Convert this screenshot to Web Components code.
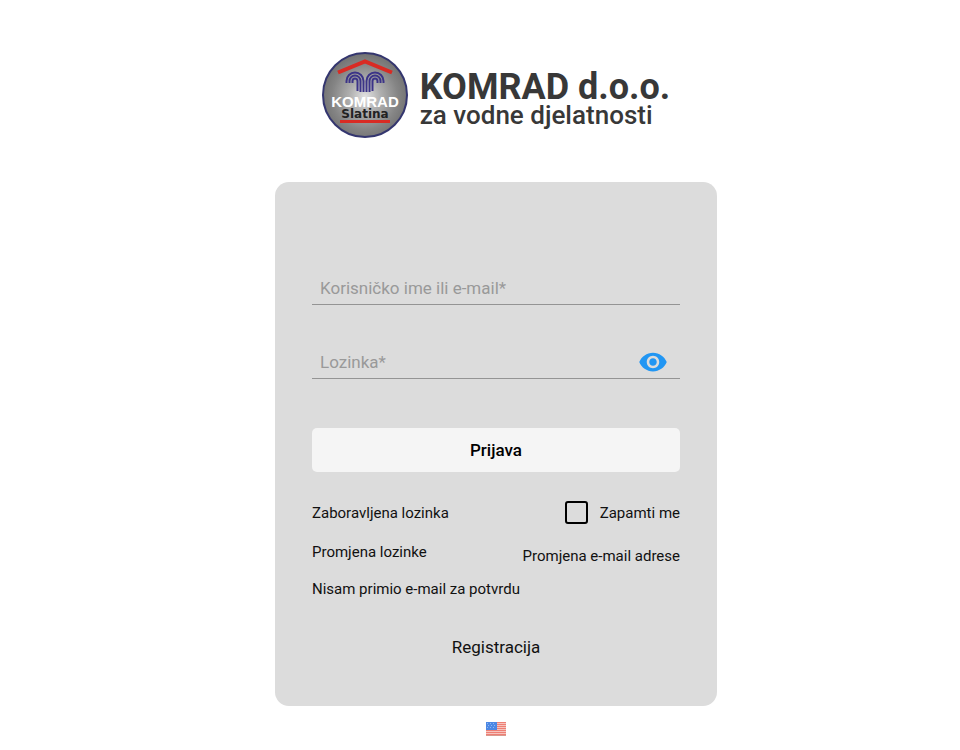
<!DOCTYPE html>
<html lang="hr">
<head>
<meta charset="utf-8">
<meta name="viewport" content="width=device-width, initial-scale=1">
<title>KOMRAD d.o.o.</title>
<style>
  body {
    margin: 0;
    background: #fff;
    color: #111;
    font: 15px/20px Roboto, sans-serif;
  }
</style>
</head>
<body>
<login-page>
  <brand-logo slot="header"></brand-logo>
  <login-card>
    <text-field name="username">Korisničko ime ili e-mail*</text-field>
    <text-field name="password" type="password">Lozinka*</text-field>
    <submit-button>Prijava</submit-button>
    <login-links></login-links>
  </login-card>
  <language-switch slot="footer"></language-switch>
</login-page>

<script>
class BaseElement extends HTMLElement {

  constructor() {
    super()
    this.attachShadow({ mode: 'open' })
    this.shadowRoot.innerHTML = this.render()
  }

}

customElements.define('login-page', class extends BaseElement {

  render() {
    return `
      <style>
        :host {
          display: flex;
          flex-direction: column;
          align-items: center;
          padding: 52px 0 12px 32px;
        }
        main {
          width: 100%;
          max-width: 442px;
          margin: 44px 0 16px;
        }
      </style>
      <slot name="header"></slot>
      <main><slot></slot></main>
      <slot name="footer"></slot>
    `
  }

})

customElements.define('brand-logo', class extends BaseElement {

  render() {
    return `
      <style>
        :host {
          display: flex;
          align-items: center;
          gap: 12px;
          color: #383838;
          white-space: nowrap;
        }
        svg { display: block; flex: none; }
        .name { padding-top: 12px; }
        strong, span { display: block; }
        strong { font: bold 36px/28px Roboto, sans-serif; }
        span { font: 500 26px/28px Roboto, sans-serif; }
      </style>
      <svg width="86" height="86" viewBox="0 0 86 86" aria-hidden="true">
        <defs>
          <radialGradient id="metal" cx="50%" cy="52%" r="52%">
            <stop offset="0" stop-color="#e2e2e2"/>
            <stop offset=".35" stop-color="#b0b0b0"/>
            <stop offset=".75" stop-color="#858585"/>
            <stop offset="1" stop-color="#727272"/>
          </radialGradient>
        </defs>
        <circle cx="43" cy="43" r="42" fill="url(#metal)" stroke="#34366f" stroke-width="2"/>
        <path d="M16 20.500 43 9.500 70 20.500" fill="none" stroke="#d92b24" stroke-width="4"/>
        <g fill="none" stroke="#3c3488" stroke-width="2">
          <path d="M24.500 31V29a8.500 8.500 0 0 1 17 0V40M27.500 31V29a5.500 5.500 0 0 1 11 0V40M30.500 31V29a2.500 2.500 0 0 1 5 0V39"/>
          <path d="M61.500 31V29a8.500 8.500 0 0 0-17 0V40M58.500 31V29a5.500 5.500 0 0 0-11 0V40M55.500 31V29a2.500 2.500 0 0 0-5 0V39"/>
        </g>
        <text x="43" y="55" text-anchor="middle" fill="#fff" font-family="Liberation Sans, sans-serif" font-weight="bold" font-size="15">KOMRAD</text>
        <text x="43" y="66" text-anchor="middle" fill="#222" font-family="DejaVu Sans, sans-serif" font-weight="bold" font-size="12">Slatina</text>
        <path d="M18 69.500H68" stroke="#d92b24" stroke-width="3"/>
      </svg>
      <div class="name">
        <strong>KOMRAD d.o.o.</strong>
        <span>za vodne djelatnosti</span>
      </div>
    `
  }

})

customElements.define('login-card', class extends BaseElement {

  render() {
    return `
      <style>
        :host {
          display: block;
          padding: 90px 37px 47px;
          border-radius: 14px;
          background: #dcdcdc;
        }
      </style>
      <form><slot></slot></form>
    `
  }

})

customElements.define('text-field', class extends BaseElement {

  render() {
    const password = this.getAttribute('type') === 'password'
    return `
      <style>
        :host {
          display: grid;
          align-items: center;
          margin-bottom: 41px;
          border-bottom: 1px solid #949494;
          font-size: 17px;
          line-height: 32px;
        }
        label, input, button { grid-row: 1; grid-column: 1; }
        label { padding: 0 8px; color: #999; pointer-events: none; z-index: 1; }
        label:has(~ input:focus), label:has(~ input:not(:placeholder-shown)) { visibility: hidden; }
        input {
          box-sizing: border-box;
          width: 100%;
          height: 32px;
          padding: 0 8px;
          border: 0;
          outline: 0;
          background: none;
          color: #111;
          font: inherit;
        }
        button {
          justify-self: end;
          z-index: 1;
          margin-right: 12px;
          padding: 0;
          border: 0;
          background: none;
          color: #2196f3;
          cursor: pointer;
        }
        svg { display: block; }
      </style>
      <label for="field"><slot></slot></label>
      <input id="field" name="${this.getAttribute('name')}" type="${password ? 'password' : 'text'}" placeholder=" " required>
      ${password ? `
      <button type="button" aria-label="Prikaži lozinku">
        <svg width="30" height="30" viewBox="0 0 24 24" fill="currentColor">
          <path d="M12 4.500C7 4.500 2.730 7.610 1 12c1.730 4.390 6 7.500 11 7.500s9.270-3.110 11-7.500c-1.730-4.390-6-7.500-11-7.500zM12 17c-2.760 0-5-2.240-5-5s2.240-5 5-5 5 2.240 5 5-2.240 5-5 5zm0-8c-1.660 0-3 1.340-3 3s1.340 3 3 3 3-1.340 3-3-1.340-3-3-3z"/>
        </svg>
      </button>` : ''}
    `
  }

  connectedCallback() {
    const input = this.shadowRoot.querySelector('input')
    const button = this.shadowRoot.querySelector('button')
    if (!button) return
    button.onclick = () => {
      input.type = input.type === 'password' ? 'text' : 'password'
    }
  }

})

customElements.define('submit-button', class extends BaseElement {

  render() {
    return `
      <style>
        :host { display: block; margin-top: 49px; }
        button {
          display: block;
          width: 100%;
          height: 44px;
          border: 0;
          border-radius: 5px;
          background: #f5f5f5;
          color: #000;
          font: 500 17px/24px Roboto, sans-serif;
          cursor: pointer;
        }
      </style>
      <button type="submit"><slot></slot></button>
    `
  }

})

customElements.define('login-links', class extends BaseElement {

  render() {
    return `
      <style>
        :host { display: block; margin-top: 29px; }
        a { color: inherit; text-decoration: none; }
        .row {
          display: flex;
          flex-wrap: wrap;
          justify-content: space-between;
          align-items: center;
        }
        .links { align-items: flex-start; padding-top: 18px; }
        .lower { padding-top: 4px; }
        .remember { display: flex; align-items: center; gap: 12px; }
        input {
          appearance: none;
          box-sizing: border-box;
          width: 23px;
          height: 23px;
          margin: 0;
          border: 2px solid #000;
          border-radius: 3px;
        }
        input:checked { background: #000; box-shadow: inset 0 0 0 3px #dcdcdc; }
        .resend { padding-top: 13px; }
        .register { padding-top: 36px; text-align: center; font-size: 17px; line-height: 24px; }
      </style>
      <div class="row">
        <a href="#forgot">Zaboravljena lozinka</a>
        <label class="remember"><input type="checkbox" name="remember">Zapamti me</label>
      </div>
      <div class="row links">
        <a href="#password">Promjena lozinke</a>
        <a class="lower" href="#email">Promjena e-mail adrese</a>
      </div>
      <div class="resend"><a href="#resend">Nisam primio e-mail za potvrdu</a></div>
      <div class="register"><a href="#register">Registracija</a></div>
    `
  }

})

customElements.define('language-switch', class extends BaseElement {

  render() {
    return `
      <style>
        :host { display: block; }
        a, svg { display: block; }
      </style>
      <a href="#en" aria-label="English">
        <svg width="20" height="14" viewBox="0 0 20 14">
          <path fill="#f6c4bd" d="M0 0h20v14H0z"/>
          <path stroke="#ee7f75" d="M0 .5h20M0 2.500h20M0 4.500h20M0 6.500h20M0 8.500h20M0 10.500h20M0 12.500h20"/>
          <path fill="#4d88e4" d="M0 0h11v8H0z"/>
          <path stroke="#8fb6f0" stroke-dasharray="1 2" d="M1 1.500h9M2 3.500h8M1 5.500h9"/>
          <path fill="none" stroke="#b9705f" stroke-opacity=".5" d="M0 13.500h20"/>
        </svg>
      </a>
    `
  }

})
</script>
</body>
</html>
